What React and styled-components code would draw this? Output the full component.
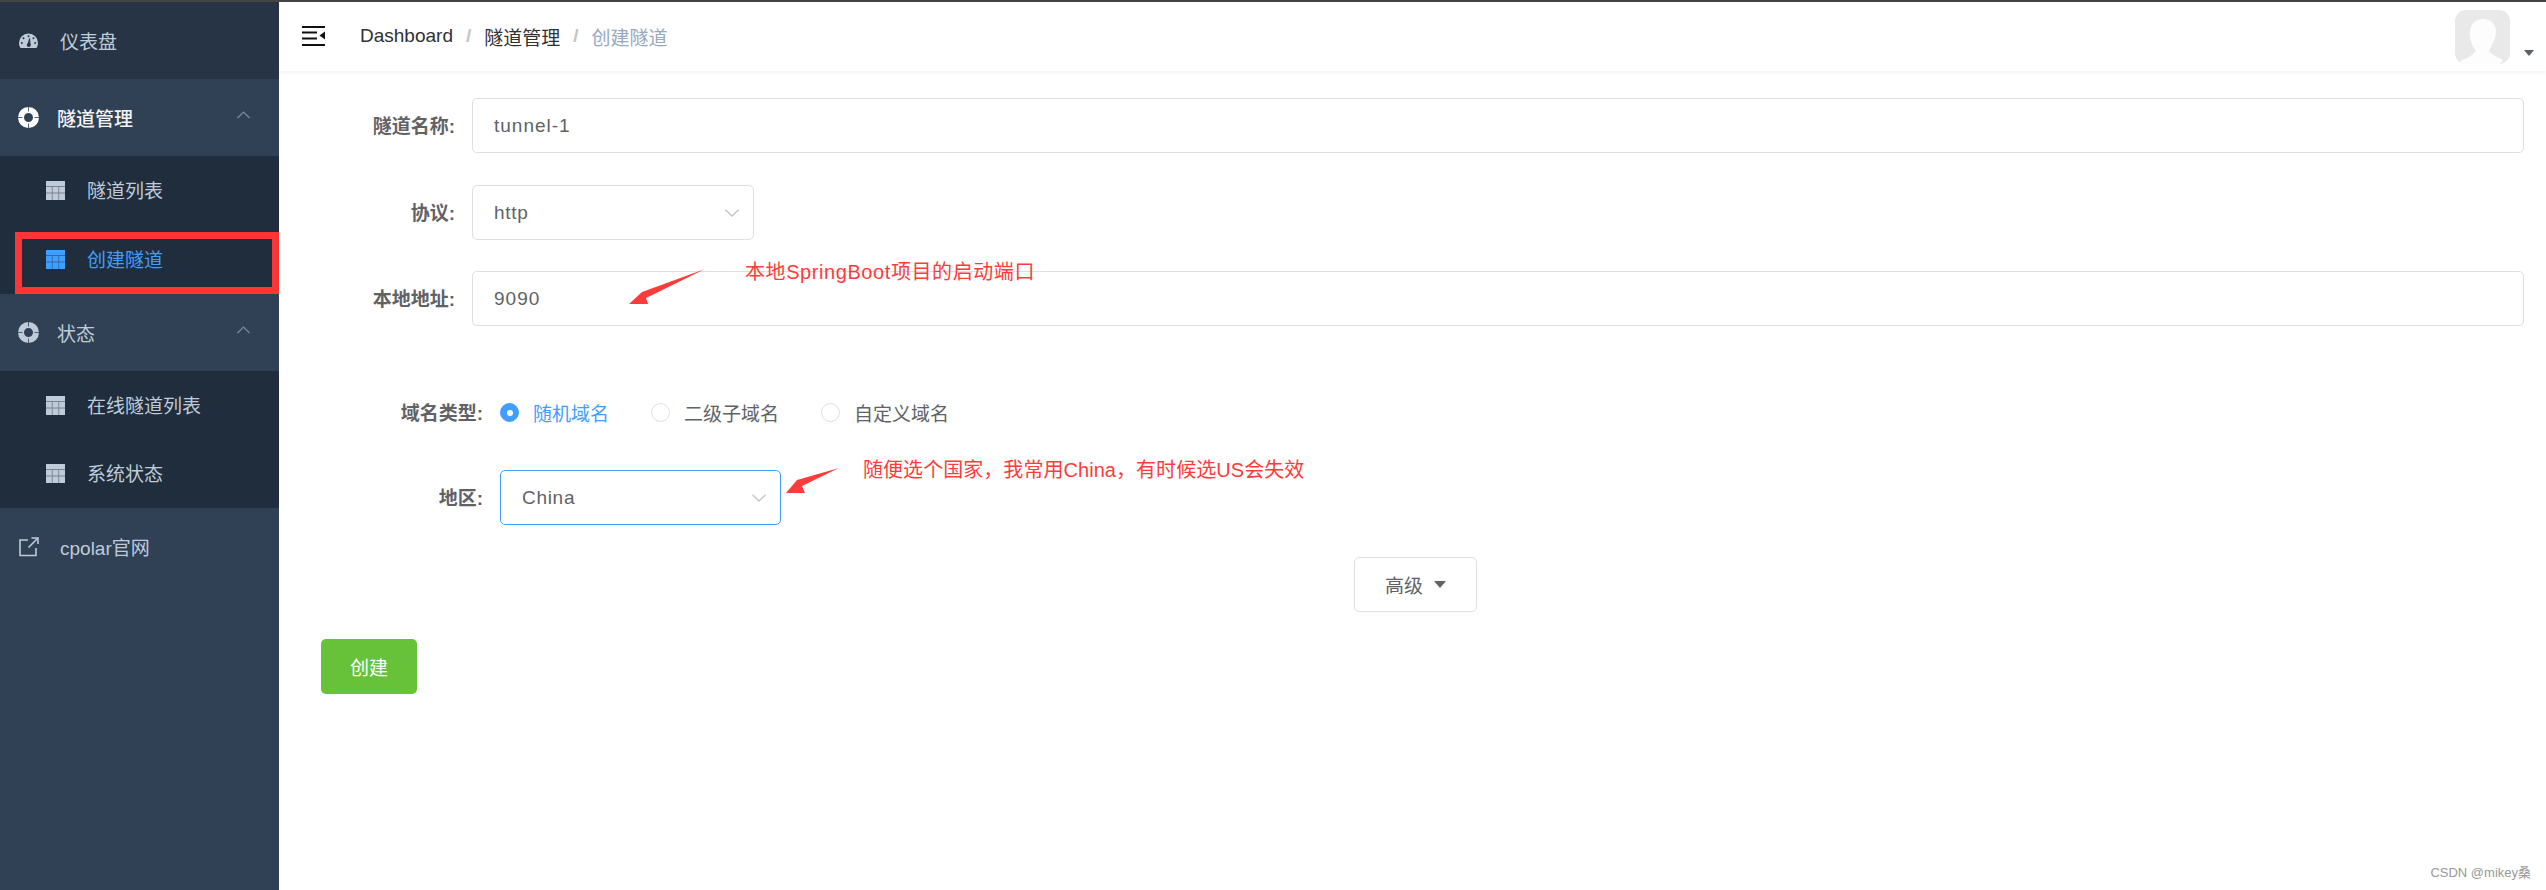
import React from "react";
import styled, { createGlobalStyle } from "styled-components";

const Global = createGlobalStyle`
  html, body { margin: 0; padding: 0; background: #fff; }
  body { font-family: "Liberation Sans", "Noto Sans CJK SC", sans-serif; font-size: 19px; overflow: hidden; }
  * { box-sizing: border-box; }
`;

const Page = styled.div`
  position: relative;
  width: 2546px;
  height: 890px;
  display: flex;
  flex-direction: column;
  overflow: hidden;
`;
const TopLine = styled.div`height: 2px; background: #454545; flex: none;`;
const Body = styled.div`flex: 1; display: flex; min-height: 0;`;

const Sidebar = styled.aside`
  position: relative;
  width: 279px;
  flex: none;
  background: #304156;
  display: flex;
  flex-direction: column;
`;
const MenuItem = styled.div`
  height: 77px;
  flex: none;
  display: flex;
  align-items: center;
  padding-left: ${p => p.$pad || 19}px;
  color: ${p => (p.$open ? "#f4f4f5" : "#bfcbd9")};
  background: ${p => p.$bg || "transparent"};
  font-size: 19px;
`;
const MenuLabel = styled.span`margin-left: ${p => p.$gap}px; font-weight: ${p => (p.$strong ? 500 : 400)};`;
const Caret = styled.svg`margin-left: auto; margin-right: 29px; margin-top: -6px;`;
const SubMenu = styled.div`
  background: #1f2d3d;
  height: ${p => p.$h}px;
  flex: none;
  display: flex;
  flex-direction: column;
`;
const SubItem = styled.div`
  flex: 1;
  display: flex;
  align-items: center;
  padding-left: 46px;
  color: ${p => (p.$active ? "#409eff" : "#bfcbd9")};
`;
const SubLabel = styled.span`margin-left: 22px; margin-top: -2px;`;
const Highlight = styled.div`
  position: absolute;
  left: 15px;
  top: 230px;
  width: 264px;
  height: 62px;
  border: 7px solid #fe3536;
  pointer-events: none;
`;

const Main = styled.main`flex: 1; min-width: 0; display: flex; flex-direction: column;`;
const Header = styled.header`
  height: 69px;
  flex: none;
  display: flex;
  align-items: center;
  padding: 0 12px 0 23px;
  background: #fff;
  box-shadow: 0 1px 4px rgba(0, 21, 41, 0.08);
`;
const Crumbs = styled.nav`display: flex; align-items: center; margin-left: 35px; margin-top: -1px;`;
const Crumb = styled.span`color: ${p => (p.$last ? "#97a8be" : "#303133")};`;
const Sep = styled.span`color: #c0c4cc; font-weight: 700; margin: 0 13px;`;
const Avatar = styled.div`
  margin-left: auto;
  width: 55px;
  height: 54px;
  border-radius: 11px;
  background: #e9e9e9;
  overflow: hidden;
  flex: none;
  margin-top: 1px;
`;
const AvatarCaret = styled.div`
  width: 0;
  height: 0;
  margin: 32px 0 0 14px;
  border-left: 5px solid transparent;
  border-right: 5px solid transparent;
  border-top: 6px solid #5a5e66;
`;

const Content = styled.div`
  position: relative;
  flex: 1;
  padding: 27px 22px 0 42px;
  display: flex;
  flex-direction: column;
`;
const Row = styled.div`
  height: 55px;
  display: flex;
  align-items: center;
  flex: none;
  margin-top: ${p => p.$mt ?? 0}px;
`;
const Label = styled.label`
  width: ${p => p.$w}px;
  flex: none;
  text-align: right;
  margin-right: 17px;
  margin-top: -2px;
  font-size: 19px;
  font-weight: 700;
  color: #606266;
`;
const Input = styled.div`
  flex: 1;
  height: 55px;
  padding: 0 21px;
  display: flex;
  align-items: center;
  border: 1.5px solid #dcdfe6;
  border-radius: 5px;
  color: #606266;
  letter-spacing: 1px;
`;
const Select = styled.div`
  width: ${p => p.$w}px;
  height: 55px;
  padding: 0 14px 0 21px;
  display: flex;
  align-items: center;
  justify-content: space-between;
  border: 1.5px solid ${p => (p.$focus ? "#409eff" : "#dcdfe6")};
  border-radius: 5px;
  color: #606266;
  letter-spacing: 0.7px;
`;
const Radios = styled.div`display: flex; align-items: center;`;
const Radio = styled.div`
  display: flex;
  align-items: center;
  margin-right: 42px;
  color: ${p => (p.$on ? "#409eff" : "#606266")};
`;
const Dot = styled.span`
  width: 19px;
  height: 19px;
  border-radius: 50%;
  margin-right: 14px;
  display: flex;
  align-items: center;
  justify-content: center;
  background: ${p => (p.$on ? "#409eff" : "#fff")};
  border: 1.5px solid ${p => (p.$on ? "#409eff" : "#dcdfe6")};
  &::after {
    content: "";
    width: 6px;
    height: 6px;
    border-radius: 50%;
    background: ${p => (p.$on ? "#fff" : "transparent")};
  }
`;
const AdvancedWrap = styled.div`display: flex; justify-content: center; margin-top: 32px; padding-right: 14px;`;
const Advanced = styled.button`
  width: 123px;
  height: 55px;
  display: flex;
  align-items: center;
  justify-content: center;
  gap: 11px;
  background: #fff;
  border: 1.5px solid #dcdfe6;
  border-radius: 5px;
  color: #606266;
  font: inherit;
  padding: 0;
`;
const AdvCaret = styled.span`
  width: 0;
  height: 0;
  border-left: 6px solid transparent;
  border-right: 6px solid transparent;
  border-top: 7px solid #606266;
`;
const Create = styled.button`
  width: 96px;
  height: 55px;
  margin-top: 27px;
  align-self: flex-start;
  background: #67c23a;
  border: none;
  border-radius: 5px;
  color: #fff;
  font: inherit;
  padding: 0;
`;
const Note = styled.div`
  position: absolute;
  left: ${p => p.$x}px;
  top: ${p => p.$y}px;
  color: #fe3b3b;
  font-size: 20px;
  line-height: 24px;
  letter-spacing: ${p => p.$ls}px;
  white-space: nowrap;
`;
const Arrows = styled.svg`position: absolute; left: 0; top: 0; pointer-events: none;`;
const Watermark = styled.div`
  position: absolute;
  right: 15px;
  bottom: 9px;
  font-size: 13px;
  color: #999;
`;

const Gauge = () => (
  <svg width="19" height="16" viewBox="0 0 19 16">
    <path d="M9.5 0.5A9.5 9.5 0 0 0 0 10c0 2 .6 3.7 1.6 5h15.8c1-1.3 1.6-3 1.6-5A9.5 9.5 0 0 0 9.5 .5z" fill="#bfcbd9" />
    <path d="M9 11.500L10.600 5.500 11 11.800z" fill="#304156" stroke="#263445" strokeWidth="1" />
    <circle cx="9.800" cy="12" r="2" fill="#263445" />
    <circle cx="9.500" cy="3.200" r="1" fill="#263445" />
    <circle cx="4.500" cy="5.200" r="1" fill="#263445" />
    <circle cx="14.500" cy="5.200" r="1" fill="#263445" />
    <circle cx="2.800" cy="10" r="1" fill="#263445" />
    <circle cx="16.200" cy="10" r="1" fill="#263445" />
  </svg>
);
const Lifesaver = ({ color }) => (
  <svg width="21" height="21" viewBox="0 0 21 21">
    <circle cx="10.500" cy="10.500" r="7.500" fill="none" stroke={color} strokeWidth="6" />
    <path d="M10.500 0v4.500M10.500 16.500v4.500M0 10.500h4.500M16.500 10.500h4.500" stroke="#304156" strokeWidth="0.8" />
  </svg>
);
const TableIcon = ({ color }) => (
  <svg width="19" height="19" viewBox="0 0 19 19" style={{ flex: "none" }}>
    <path d="M0 0h19v19H0z" fill={color} fillOpacity="0.55" />
    <path d="M0 0h19v5H0z" fill={color} />
    <path d="M0 6h5.800v5.400H0zM6.700 6h5.600v5.400H6.700zM13.200 6H19v5.400h-5.800zM0 12.400h5.800V19H0zM6.700 12.400h5.600V19H6.700zM13.200 12.400H19V19h-5.800z" fill={color} />
  </svg>
);
const LinkIcon = () => (
  <svg width="20" height="20" viewBox="0 0 20 20" fill="none" stroke="#bfcbd9" strokeWidth="1.6">
    <path d="M9 3H1v15.500h16V11" />
    <path d="M9.500 10.500L18 2" />
    <path d="M12.500 1h6.500v6" strokeWidth="1.6" />
  </svg>
);
const Up = () => (
  <Caret width="13" height="8" viewBox="0 0 13 8" fill="none" stroke="#7f8a98" strokeWidth="1.2">
    <path d="M0.500 7L6.500 1l6 6" />
  </Caret>
);
const Down = () => (
  <svg width="14" height="8" viewBox="0 0 14 8" fill="none" stroke="#c0c4cc" strokeWidth="1.3" style={{ flex: "none" }}>
    <path d="M0.500 0.800L7 7l6.500-6.200" />
  </svg>
);
const Hamburger = () => (
  <svg width="23" height="20" viewBox="0 0 23 20" fill="#111" style={{ flex: "none", marginTop: -1 }}>
    <path d="M0 0h23v2H0zM0 18h23v2H0zM0 5.500h15v2H0zM0 11.500h15v2H0zM23 5.500v8l-5.500-4z" />
  </svg>
);
const Person = () => (
  <svg width="55" height="54" viewBox="0 0 55 54">
    <path d="M28 9c8 0 13 5 13 12 0 5-1 8-3 11-1 4-3 7-4 9 2 3 8 6 14 9l-3 4H8l-3-3c6-2 13-6 16-10-2-3-4-6-5-9-1-4-2-7-1-11C16 13 21 9 28 9z" fill="#fdfdfd" />
  </svg>
);

export default function App() {
  return (
    <Page>
      <Global />
      <TopLine />
      <Body>
        <Sidebar>
          <MenuItem $bg="#263445">
            <Gauge />
            <MenuLabel $gap={22}>仪表盘</MenuLabel>
          </MenuItem>
          <MenuItem $open $pad={18}>
            <Lifesaver color="#ffffff" />
            <MenuLabel $gap={18} $strong>隧道管理</MenuLabel>
            <Up />
          </MenuItem>
          <SubMenu $h={138}>
            <SubItem>
              <TableIcon color="#bfcbd9" />
              <SubLabel>隧道列表</SubLabel>
            </SubItem>
            <SubItem $active>
              <TableIcon color="#409eff" />
              <SubLabel>创建隧道</SubLabel>
            </SubItem>
          </SubMenu>
          <MenuItem $pad={18}>
            <Lifesaver color="#bfcbd9" />
            <MenuLabel $gap={18}>状态</MenuLabel>
            <Up />
          </MenuItem>
          <SubMenu $h={137}>
            <SubItem>
              <TableIcon color="#bfcbd9" />
              <SubLabel>在线隧道列表</SubLabel>
            </SubItem>
            <SubItem>
              <TableIcon color="#bfcbd9" />
              <SubLabel>系统状态</SubLabel>
            </SubItem>
          </SubMenu>
          <MenuItem>
            <LinkIcon />
            <MenuLabel $gap={21}>cpolar官网</MenuLabel>
          </MenuItem>
          <Highlight />
        </Sidebar>
        <Main>
          <Header>
            <Hamburger />
            <Crumbs>
              <Crumb>Dashboard</Crumb>
              <Sep>/</Sep>
              <Crumb>隧道管理</Crumb>
              <Sep>/</Sep>
              <Crumb $last>创建隧道</Crumb>
            </Crumbs>
            <Avatar><Person /></Avatar>
            <AvatarCaret />
          </Header>
          <Content>
            <Row>
              <Label $w={134}>隧道名称:</Label>
              <Input>tunnel-1</Input>
            </Row>
            <Row $mt={32}>
              <Label $w={134}>协议:</Label>
              <Select $w={282}>http<Down /></Select>
            </Row>
            <Row $mt={31}>
              <Label $w={134}>本地地址:</Label>
              <Input>9090</Input>
            </Row>
            <Row $mt={59}>
              <Label $w={162}>域名类型:</Label>
              <Radios>
                <Radio $on><Dot $on />随机域名</Radio>
                <Radio><Dot />二级子域名</Radio>
                <Radio><Dot />自定义域名</Radio>
              </Radios>
            </Row>
            <Row $mt={30}>
              <Label $w={162}>地区:</Label>
              <Select $w={281} $focus>China<Down /></Select>
            </Row>
            <AdvancedWrap>
              <Advanced>高级<AdvCaret /></Advanced>
            </AdvancedWrap>
            <Create>创建</Create>
            <Arrows width="2267" height="819" viewBox="279 71 2267 819">
              <path d="M629 304L642 292 705 269 646 298 648 304z" fill="#fe3b3b" />
              <path d="M786 493L797 480 839 468 802 486 805 493z" fill="#fe3b3b" />
            </Arrows>
            <Note $x={466} $y={189} $ls={0.58}>本地SpringBoot项目的启动端口</Note>
            <Note $x={584} $y={387} $ls={0.05}>随便选个国家，我常用China，有时候选US会失效</Note>
            <Watermark>CSDN @mikey桑</Watermark>
          </Content>
        </Main>
      </Body>
    </Page>
  );
}
